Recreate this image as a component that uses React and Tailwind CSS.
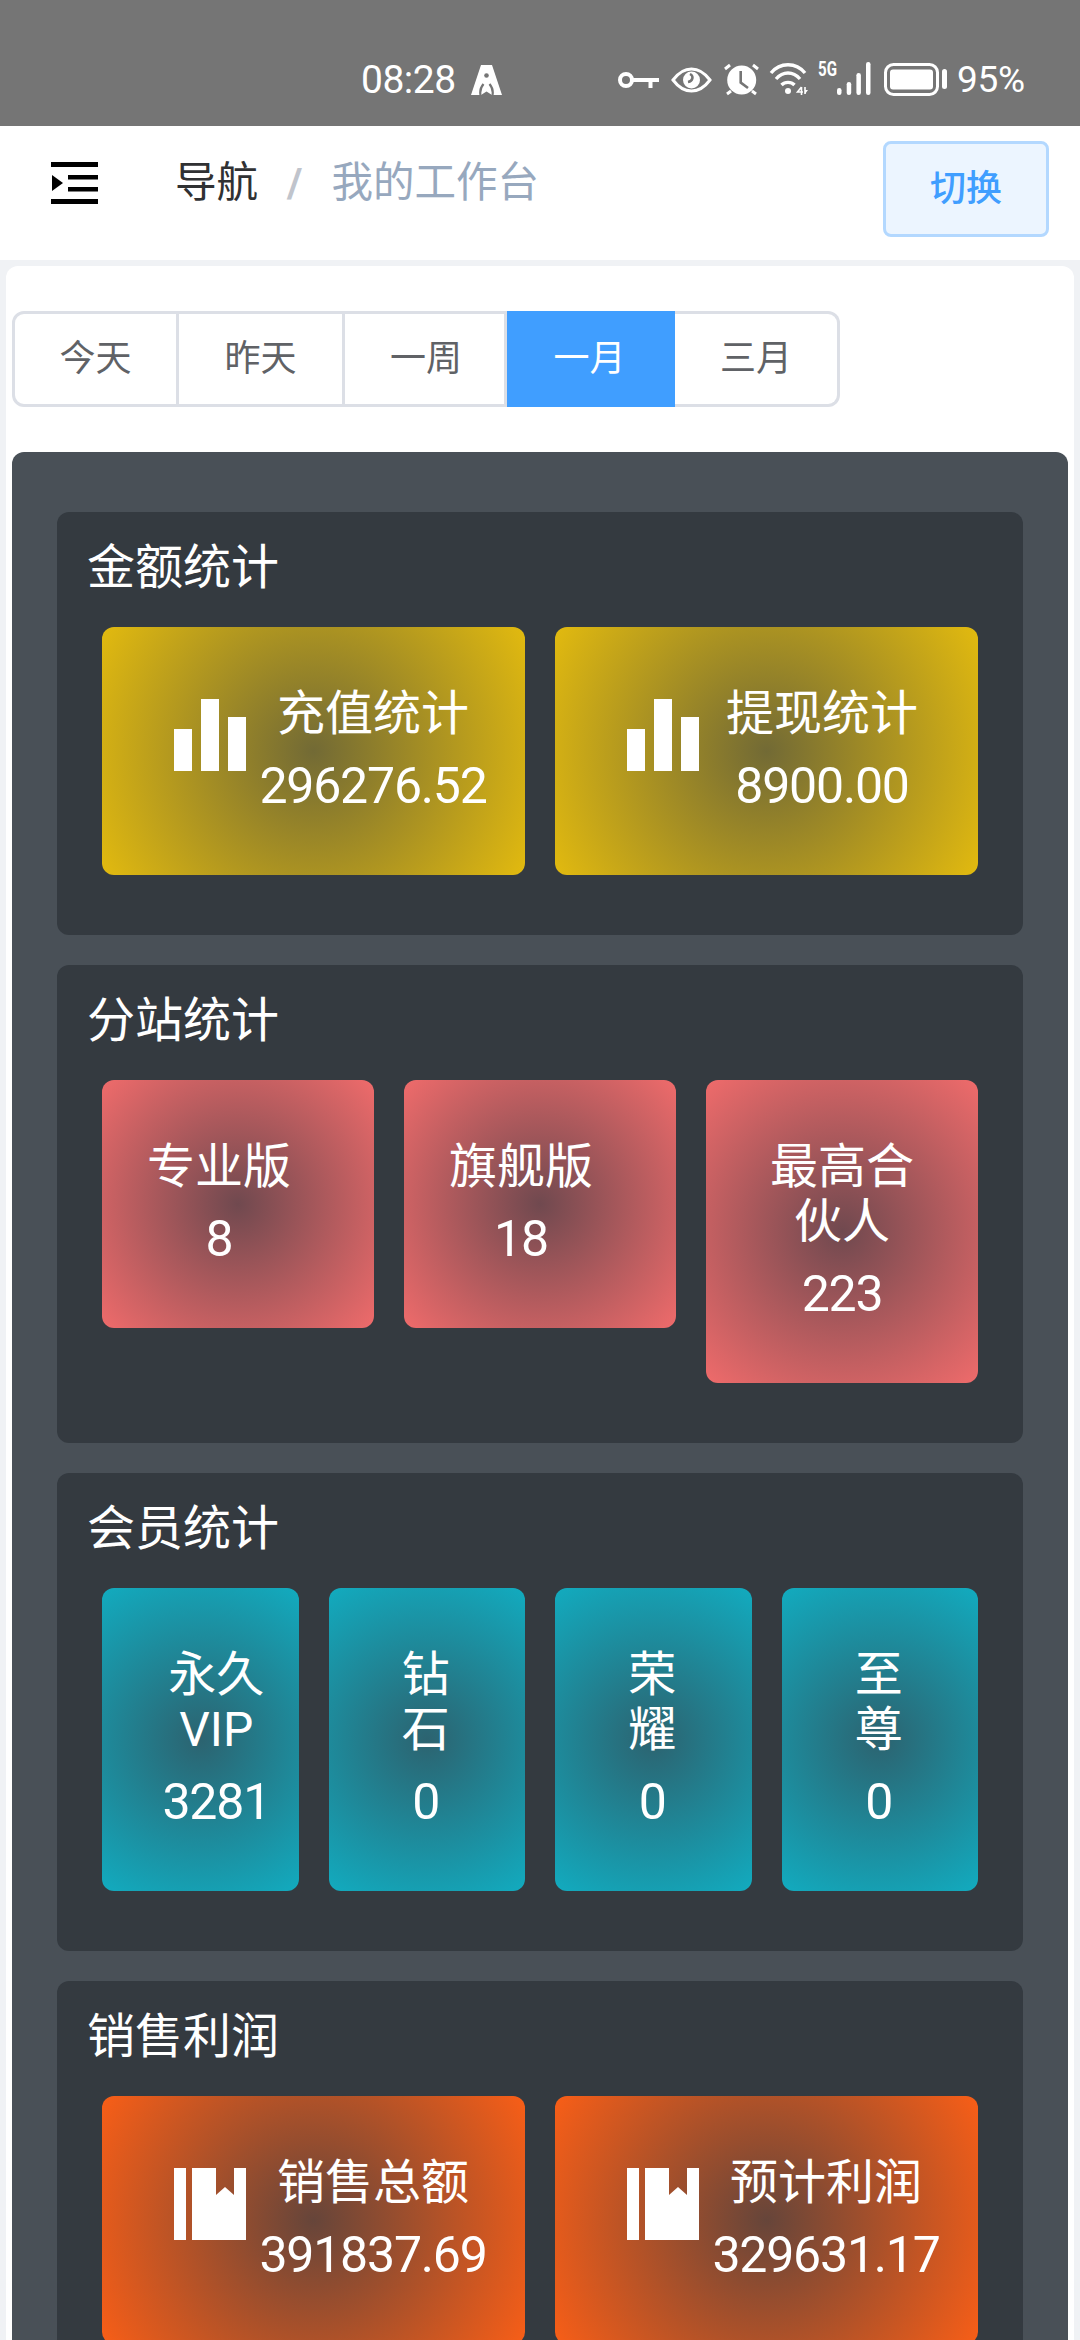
const cjk = "font-['Roboto','Noto_Sans_CJK_SC',sans-serif]";

function BarsIcon() {
  return (
    <svg width="72" height="72" viewBox="0 0 72 72" className="block" fill="#fff">
      <rect x="0" y="30" width="18" height="42" />
      <rect x="27" y="0" width="18" height="72" />
      <rect x="54" y="18" width="18" height="54" />
    </svg>
  );
}

function BookIcon() {
  return (
    <svg width="72" height="72" viewBox="0 0 72 72" className="block" fill="#fff">
      <rect x="0" y="0" width="12" height="72" />
      <path d="M18 0H42V27L51 19L60 27V0H72V72H18Z" />
    </svg>
  );
}

const YELLOW = "bg-[radial-gradient(circle_at_center,#726a35,#e2ba0f)]";
const RED = "bg-[radial-gradient(circle_at_center,#70494f,#ef6b6b)]";
const TEAL = "bg-[radial-gradient(circle_at_center,#2c6370,#12abbf)]";
const ORANGE = "bg-[radial-gradient(circle_at_center,#66453a,#f85e17)]";

const NUM = "mt-[18px] text-[50px] leading-[55px] font-normal tracking-[-1.2px]";

function WideCard({ color, icon, title, value, textShift }) {
  return (
    <div className={`flex h-[248px] flex-1 items-start rounded-xl pt-[59px] pl-[72px] ${color}`}>
      <div className="mt-[13px]">{icon}</div>
      <div className={`w-[232px] text-center ${textShift}`}>
        <div className="text-[48px] leading-[55px]">{title}</div>
        <div className={NUM}>{value}</div>
      </div>
    </div>
  );
}

function Section({ title, children, className }) {
  return (
    <section className={`rounded-xl bg-[#343a40] px-[45px] pt-[28px] ${className}`}>
      <h2 className="-ml-[15px] text-[48px] leading-[56px] font-normal text-white">{title}</h2>
      <div className="mt-[31px] flex items-start gap-[30px]">{children}</div>
    </section>
  );
}

function RedCard({ lines, value, className }) {
  return (
    <div className={`flex-1 rounded-xl pt-[59px] pb-[61px] ${RED}`}>
      <div className={`w-[148px] text-center ${className}`}>
        <div className="text-[48px] leading-[55px]">{lines}</div>
        <div className={NUM}>{value}</div>
      </div>
    </div>
  );
}

function TealCard({ a, b, value, className }) {
  return (
    <div className={`h-[303px] flex-1 rounded-xl pt-[59px] text-center ${TEAL}`}>
      <div className={className}>
        <div className="text-[48px] leading-[55px]">{a}<br />{b}</div>
        <div className={NUM}>{value}</div>
      </div>
    </div>
  );
}

function StatusBar() {
  return (
    <div className="flex h-[126px] items-start bg-[#757575] pt-[61px] pl-[361px] text-white">
      <span className="w-[95px] text-[39px] leading-[38px] tracking-[-0.5px] whitespace-nowrap">08:28</span>
      <svg width="31" height="30" viewBox="0 0 31 30" className="mt-[4px] ml-[15px]">
        <path d="M10 0H21L31 30H0Z" fill="#fff" />
        <circle cx="15.5" cy="10.5" r="2.3" fill="#757575" />
        <path d="M9.5 30C8.5 25 10 22 12.5 19M21.5 30C22.5 25 21 22 18.5 19" stroke="#757575" strokeWidth="2.2" fill="none" />
        <path d="M10 30L15.5 26.5L21 30Z" fill="#757575" />
      </svg>
      <svg width="41" height="16" viewBox="0 0 41 16" fill="none" stroke="#fff" strokeWidth="4" className="mt-[11px] ml-[116px]">
        <circle cx="8" cy="8" r="6" />
        <path d="M14 8H41M32.5 8V16" />
      </svg>
      <svg width="41" height="26" viewBox="0 0 41 26" fill="none" stroke="#fff" strokeWidth="3" className="mt-[6px] ml-[12px]">
        <path d="M2 13C8 5 14 2 20.5 2S33 5 39 13C33 21 27 24 20.5 24S8 21 2 13Z" />
        <circle cx="20.5" cy="13" r="8.5" fill="#fff" stroke="none" />
        <path d="M19 7C23 9 22 14 17 15" stroke="#757575" strokeWidth="2.5" />
      </svg>
      <svg width="37" height="33" viewBox="0 0 37 33" fill="none" className="mt-[2px] ml-[11px]">
        <circle cx="18.7" cy="17" r="14.5" fill="#fff" />
        <path d="M17.7 8V19.5L25 25" stroke="#757575" strokeWidth="2.6" />
        <path d="M2 6L7 2M30 2L35 6M4 31L8 28M33 31L29 28" stroke="#fff" strokeWidth="3" />
      </svg>
      <svg width="39" height="33" viewBox="0 0 39 33" fill="none" stroke="#fff" strokeWidth="3.4" className="mt-[1px] ml-[9px]">
        <path d="M2 11C11 0 27 0 36 11M7 17C14 9 24 9 31 17M12.5 23C16 19.5 22 19.5 25.5 23" />
        <circle cx="19" cy="29" r="3" fill="#fff" stroke="none" />
        <path d="M36 25V32" strokeWidth="1.6" />
        <path d="M36 28L39 28L36 32Z" fill="#fff" stroke="none" />
        <path d="M32.5 25L28.5 30H34M32.5 25V33" strokeWidth="1.6" />
      </svg>
      <span className="mt-[-1px] ml-[10px] block w-[18px] origin-left scale-x-[0.72] text-[21px] leading-[18px] font-bold">5G</span>
      <svg width="34" height="33" viewBox="0 0 34 33" fill="#fff" className="mt-[1px] ml-[1px]">
        <rect x="0" y="26" width="4.5" height="7" rx="2.2" />
        <rect x="9.7" y="20" width="4.5" height="13" rx="2.2" />
        <rect x="19.4" y="11" width="4.5" height="22" rx="2.2" />
        <rect x="29" y="0" width="4.5" height="33" rx="2.2" />
      </svg>
      <svg width="63" height="33" viewBox="0 0 63 33" fill="none" className="mt-[2px] ml-[13px]">
        <rect x="1.5" y="1.5" width="52" height="30" rx="8" stroke="#fff" strokeWidth="3" />
        <rect x="6" y="6.5" width="43" height="20" rx="3" fill="#fff" />
        <rect x="58" y="6" width="5" height="20" rx="2.5" fill="#fff" />
      </svg>
      <span className="ml-[10px] text-[37px] leading-[38px] tracking-[-0.3px]">95%</span>
    </div>
  );
}

function Header() {
  return (
    <div className="flex h-[134px] items-start bg-white pt-[15px]">
      <svg width="47" height="42" viewBox="0 0 47 42" fill="#000" className="mt-[21px] ml-[51px]">
        <rect x="0" y="0" width="47" height="5" />
        <rect x="17" y="13" width="30" height="4.5" />
        <rect x="17" y="25" width="30" height="4.5" />
        <rect x="0" y="37" width="47" height="5" />
        <path d="M1 13L12 21L1 29Z" />
      </svg>
      <div className="mt-[16px] ml-[77px] flex text-[41.5px] leading-[52px]">
        <span className="text-[#303133]">导航</span>
        <span className="mx-[29px] font-bold text-[#c0c4cc]">/</span>
        <span className="text-[#97a8be]">我的工作台</span>
      </div>
      <button className="mr-[31px] ml-auto flex h-[96px] w-[166px] items-center justify-center rounded-lg border-[3px] border-[#b3d8ff] bg-[#ecf5ff] text-[36px] font-medium text-[#409eff]">切换</button>
    </div>
  );
}

function Tabs() {
  const items = [
    ["今天", "w-[167px] rounded-l-xl border-l-[3px]"],
    ["昨天", "w-[166px]"],
    ["一周", "w-[162px] border-r-0 pl-[3px]"],
    ["一月", "w-[168px] border-[#409eff] bg-[#409eff] text-white"],
    ["三月", "w-[165px] rounded-r-xl"],
  ];
  return (
    <div className="ml-[6px] flex w-fit">
      {items.map(([t, extra], i) => (
        <div
          key={t}
          className={`flex h-[96px] items-center justify-center border-y-[3px] border-r-[3px] text-[36px] ${i === 3 ? "" : "border-[#dcdfe6] bg-white text-[#606266]"} ${extra}`}
        >
          {t}
        </div>
      ))}
    </div>
  );
}

export default function App() {
  return (
    <div className={`h-[2340px] w-[1080px] overflow-hidden bg-[#f0f2f5] ${cjk}`}>
      <StatusBar />
      <Header />
      <main className="mx-[6px] mt-[6px] rounded-xl bg-white pt-[45px]">
        <Tabs />
        <div className="mx-[6px] mt-[45px] flex flex-col gap-[30px] rounded-xl bg-[#495057] px-[45px] pt-[60px] text-white">
          <Section title="金额统计" className="h-[423px]">
            <WideCard color={YELLOW} icon={<BarsIcon />} title="充值统计" value="296276.52" textShift="ml-[11px]" />
            <WideCard color={YELLOW} icon={<BarsIcon />} title="提现统计" value="8900.00" textShift="ml-[7px]" />
          </Section>
          <Section title="分站统计" className="h-[478px]">
            <RedCard lines="专业版" value="8" className="ml-[43px]" />
            <RedCard lines="旗舰版" value="18" className="ml-[43px]" />
            <RedCard lines={<>最高合<br />伙人</>} value="223" className="mx-auto" />
          </Section>
          <Section title="会员统计" className="h-[478px]">
            <TealCard a="永久" b="VIP" value="3281" className="pl-[32px]" />
            <TealCard a="钻" b="石" value="0" className="pr-[2px]" />
            <TealCard a="荣" b="耀" value="0" className="pr-[2px]" />
            <TealCard a="至" b="尊" value="0" className="pr-[2px]" />
          </Section>
          <Section title="销售利润" className="h-[424px]">
            <WideCard color={ORANGE} icon={<BookIcon />} title="销售总额" value="391837.69" textShift="ml-[11px]" />
            <WideCard color={ORANGE} icon={<BookIcon />} title="预计利润" value="329631.17" textShift="ml-[11px]" />
          </Section>
        </div>
      </main>
    </div>
  );
}
